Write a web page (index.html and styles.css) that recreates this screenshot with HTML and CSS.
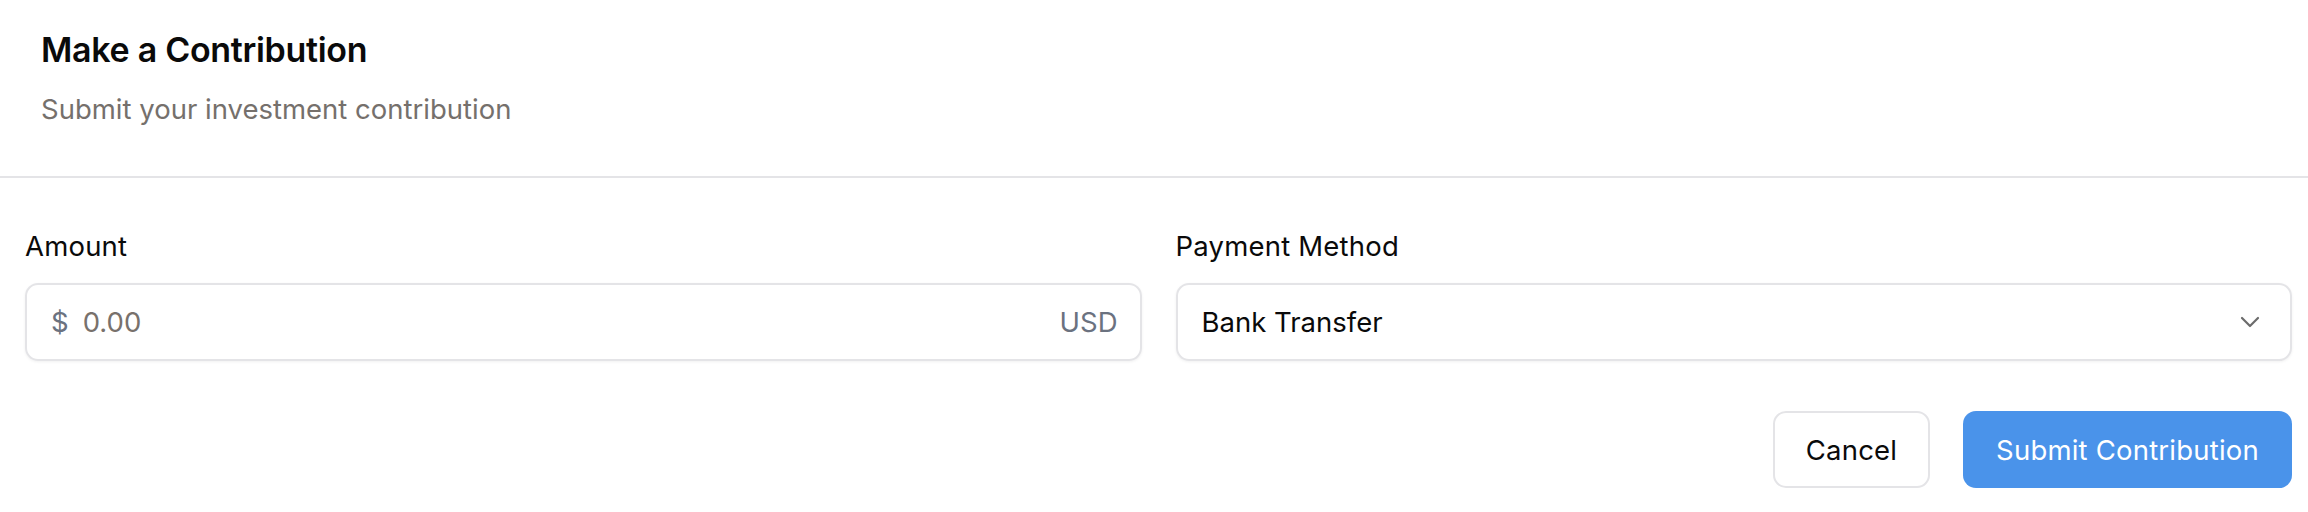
FILE: index.html
```html
<!DOCTYPE html>
<html lang="en">
<head>
<meta charset="utf-8">
<title>Make a Contribution</title>
<link rel="stylesheet" href="styles.css">
</head>
<body>
<div class="card">
  <header class="card-header">
    <h2 class="card-title">Make a Contribution</h2>
    <p class="card-desc">Submit your investment contribution</p>
  </header>
  <form class="card-body">
    <div class="fields">
      <div class="field">
        <label class="label">Amount</label>
        <div class="input">
          <span class="prefix">$</span>
          <span class="placeholder">0.00</span>
          <span class="suffix">USD</span>
        </div>
      </div>
      <div class="field">
        <label class="label">Payment Method</label>
        <div class="input select">
          <span class="value">Bank Transfer</span>
          <svg class="chev" width="20" height="12" viewBox="0 0 20 12" fill="none"><path d="M2 2l8 8 8-8" stroke="#6b6b6b" stroke-width="2.2" stroke-linecap="round" stroke-linejoin="round"/></svg>
        </div>
      </div>
    </div>
    <div class="actions">
      <button type="button" class="btn btn-outline">Cancel</button>
      <button type="button" class="btn btn-primary">Submit Contribution</button>
    </div>
  </form>
</div>
</body>
</html>
```

FILE: styles.css
```css
* { box-sizing: border-box; }
html, body { margin: 0; padding: 0; background: #ffffff; }
body {
  font-family: Inter, "Noto Sans", "Liberation Sans", sans-serif;
  color: #0a0a0a;
  width: 2308px;
  height: 512px;
  overflow: hidden;
}
.card-header {
  padding: 26px 41px 0;
  height: 178px;
  border-bottom: 2px solid #e4e4e7;
}
.card-title {
  margin: 0;
  font-size: 34px;
  line-height: 48px;
  font-weight: 600;
  letter-spacing: -0.3px;
}
.card-desc {
  margin: 15px 0 0;
  font-size: 27.5px;
  line-height: 40px;
  color: #75706c;
}
.card-body {
  padding: 47px 16px 0 25px;
}
.fields {
  display: grid;
  grid-template-columns: 1fr 1fr;
  column-gap: 34px;
}
.field { display: flex; flex-direction: column; }
.label {
  font-size: 27.5px;
  line-height: 42px;
  font-weight: 400;
  letter-spacing: 0.2px;
  margin-bottom: 16px;
}
.input {
  height: 78px;
  border: 2px solid #e4e4e7;
  border-radius: 13px;
  box-shadow: 0 1px 3px rgba(0,0,0,0.06);
  display: flex;
  align-items: center;
  padding: 0 22px 0 24px;
  font-size: 27.5px;
}
.prefix { color: #6b7280; margin-right: 14px; }
.placeholder { color: #78716c; flex: 1; }
.suffix { color: #6b7280; }
.select { justify-content: space-between; padding-left: 24px; padding-right: 30px; }
.value { color: #0a0a0a; }
.actions {
  display: flex;
  justify-content: flex-end;
  gap: 33px;
  margin-top: 50px;
}
.btn {
  height: 77px;
  border-radius: 13px;
  font-family: inherit;
  font-size: 27.5px;
  font-weight: 400;
  letter-spacing: 0.2px;
  padding: 0;
}
.btn-outline {
  background: #fff;
  border: 2px solid #e4e4e7;
  color: #0a0a0a;
  width: 157px;
}
.btn-primary {
  background: #4a93ea;
  border: none;
  color: #fff;
  width: 329px;
}
```
